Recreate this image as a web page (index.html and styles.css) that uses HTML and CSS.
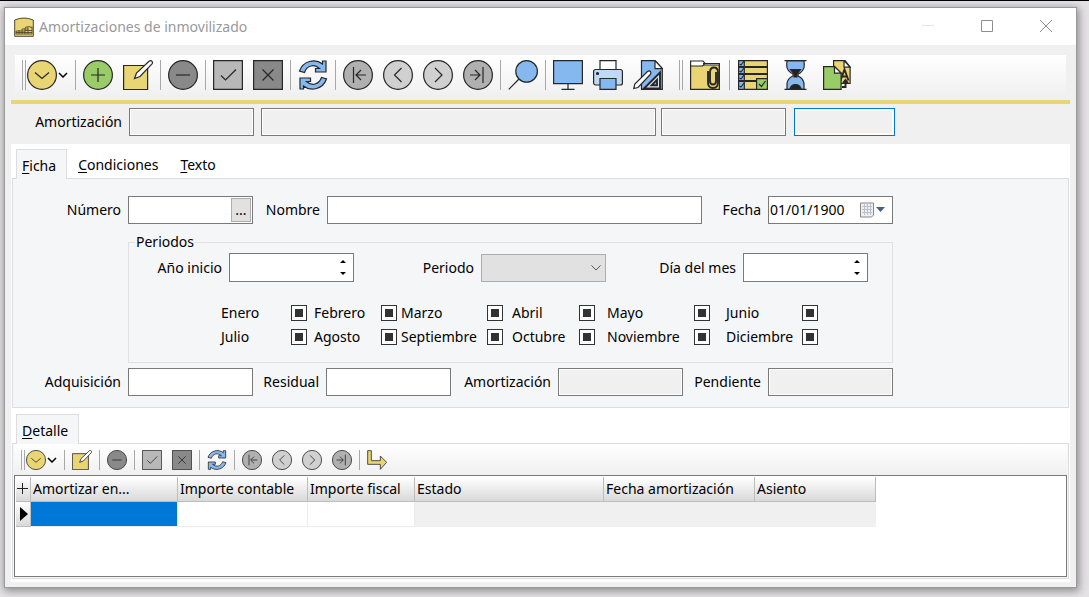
FILE: index.html
```html
<!DOCTYPE html>
<html lang="es">
<head>
<meta charset="utf-8">
<title>Amortizaciones de inmovilizado</title>
<link rel="stylesheet" href="styles.css">
</head>
<body>
<svg class="sprite" aria-hidden="true">
  <symbol id="menu" viewBox="0 0 30 30"><circle cx="15" cy="15" r="14.4" fill="#e9d574"/><path d="M8 12.500l7 6 7-6"/></symbol>
  <symbol id="caret" viewBox="0 0 10 6"><path d="M1 1l4 4 4-4"/></symbol>
  <symbol id="add" viewBox="0 0 30 30"><circle cx="15" cy="15" r="14.4" fill="#99cc66"/><path d="M15 8v14M8 15h14"/></symbol>
  <symbol id="edit" viewBox="0 0 30 30"><path d="M.6 5.500h24v24H.6z" fill="#e9d574"/><path d="M11.500 18.500l2-5.500L26 1.200q1.800-1.200 3 .2 1 1.400-.2 2.800L17 16.500z" fill="#fff"/></symbol>
  <symbol id="remove" viewBox="0 0 30 30"><circle cx="15" cy="15" r="14.4" fill="#898989"/><path d="M8 15h14"/></symbol>
  <symbol id="accept" viewBox="0 0 30 30"><path d="M.6.6h28.800v28.800H.6z" fill="#b8b8b8"/><path d="M8 15.500l4.500 4.500L23 9.500"/></symbol>
  <symbol id="cancel" viewBox="0 0 30 30"><path d="M.6.6h28.800v28.800H.6z" fill="#898989"/><path d="M9.500 9.500l11 11M20.500 9.500l-11 11"/></symbol>
  <symbol id="refresh" viewBox="0 0 30 30"><path d="M1.500 11C5 1 17-2 24.500 4V1H28v11H17.500V8.500h4C16 3.500 9 5.500 6.500 12.500zM28.500 19C25 29 13 32 5.500 26v3H2V18h10.500v3.500h-4C14 26.500 21 24.500 23.500 17.500z" fill="#85b8ef"/></symbol>
  <symbol id="first" viewBox="0 0 30 30"><circle cx="15" cy="15" r="14.4" fill="#b0b0b0"/><path d="M10.500 7v16M23 15h-9.500M18 10l-5 5 5 5"/></symbol>
  <symbol id="prev" viewBox="0 0 30 30"><circle cx="15" cy="15" r="14.4" fill="#d0d0d0"/><path d="M18.500 8l-7 7 7 7"/></symbol>
  <symbol id="next" viewBox="0 0 30 30"><circle cx="15" cy="15" r="14.4" fill="#d0d0d0"/><path d="M12 8l7 7-7 7"/></symbol>
  <symbol id="last" viewBox="0 0 30 30"><circle cx="15" cy="15" r="14.4" fill="#b0b0b0"/><path d="M20 7v16M7 15h9.500M12 10l5 5-5 5"/></symbol>
  <symbol id="find" viewBox="0 0 30 30"><circle cx="18.600" cy="11.400" r="10.800" fill="#85b8ef"/><path d="M11 19L.8 29.400"/></symbol>
  <symbol id="screen" viewBox="0 0 30 30"><path d="M.6.6h28.800v23H.6z" fill="#85b8ef"/><path d="M15 23.600v5.500M8.500 29.300h13"/></symbol>
  <symbol id="print" viewBox="0 0 30 30"><path d="M7 .6h16V10H7z" fill="#fff"/><rect x=".6" y="9.500" width="28.800" height="15.500" rx="2" fill="#bfdaf7"/><path d="M7 18.500h16v10.800H7z" fill="#85b8ef"/><circle cx="4.500" cy="13.500" r="1" fill="#272727"/></symbol>
  <symbol id="design" viewBox="0 0 30 30"><path d="M8.500.6h13.500l7.300 8v20.700H8.500z" fill="#85b8ef"/><path d="M22 .6v8h7.300z" fill="#fff"/><path d="M11 28.500L27 12.500v16zM18.500 25.300l5.500-5.500v5.500z" fill="#d8e7f8" fill-rule="evenodd" class="bold"/><path d="M.8 28.500l1-4.500L14.500 11.500q2-1.200 3 0 1 1.500-.2 3L5 27.500z" fill="#fff"/></symbol>
  <symbol id="attach" viewBox="0 0 30 30"><path d="M.6 5h28.800v24.300H.6z" fill="#e9d574"/><path d="M.6 1H13l2 2.500L12.500 6H.6z" fill="#fff"/><path d="M13 3.500h16.400V10"/><path d="M18 11v11.500q0 5.500 5 5.500t5-5.500V12.500q0-5-4-5t-4 5V21q0 3.500 3 3.500t3-3.500V12" class="bold"/></symbol>
  <symbol id="tasks" viewBox="0 0 30 30"><path d="M.6.6h28.800v28.800H.6z" fill="#e9d574"/><path d="M.6.6h5.700v28.800H.6z" fill="#85b8ef"/><path d="M6 7h23.400M6 14h23.400M6 21h13M.6 7H6M.6 14H6M.6 21H6" class="bold"/><path d="M1.500 4l1.500 1 3-4M1.500 11l1.500 1 3-4M1.500 18l1.500 1 3-4M1.500 26l1.500 1 3-4"/><path d="M18.600 18.600h10.800v10.800H18.600z" fill="#99cc66"/><path d="M21 24l2.500 2.500 4-5.500"/></symbol>
  <symbol id="wait" viewBox="0 0 30 30"><path d="M7 .6h17q.5 5 0 7-1.500 4.500-6 6.500v2q5 2 6 7v6.300H7V23q1-5 6-7v-2Q8.500 12 7 7.600 6.500 5 7 .6z" fill="#85b8ef"/><path d="M10.500 9.500h10L17 14v3h-3v-3zM10 29q1-4.500 5.500-4.500T21 29z" fill="#222"/><path d="M4.500.6h22M4.500 29.400h22"/></symbol>
  <symbol id="copy" viewBox="0 0 30 30"><path d="M11.600.6h11.500l5 6.400v16.500H11.600z" fill="#e9d574"/><path d="M22 .6v6.500h6z" fill="#fff"/><path d="M18.500 20.500l4-11 4 11M20 16.500h5" class="bold"/><path d="M1.600 6.600h11l6.500 6.500v16.300H1.600z" fill="#99cc66"/><path d="M12.500 6.600v6.500H19z" fill="#fff"/><path d="M20 27h3.500v-6M21 23l2.500-3 2.500 3" class="bold"/></symbol>
  <symbol id="go" viewBox="0 0 30 30"><path d="M1 1h5.500v15H20v-7l9.500 9.500L20 29v-7.500H1z" fill="#e9d574"/></symbol>
</svg>

<main class="window">
  <header class="titlebar">
    <svg class="app-icon" viewBox="0 0 20 20"><path d="M.7 3Q10-1 19.300 3v16.300H.7z" fill="#e9d574" stroke="#51482a"/><path d="M2 17h16M2 14h9M2 14v3M5 13v4M8 12v5M11 11v6M14 10v7M18 9.500V17M8 12h6M11 10.500q3.500-2 7 0M11 13.500h7M2 15.500h16" fill="none" stroke="#51482a" stroke-width=".9"/></svg>
    <h1 class="title">Amortizaciones de inmovilizado</h1>
    <button class="win-btn" aria-label="Minimizar" disabled><svg viewBox="0 0 12 12"><path d="M0 5.500h12" stroke="#e6e6e6"/></svg></button>
    <button class="win-btn" aria-label="Maximizar"><svg viewBox="0 0 12 12"><path d="M.5.5h11v11H.5z"/></svg></button>
    <button class="win-btn" aria-label="Cerrar"><svg viewBox="0 0 12 12"><path d="M0 0l12 12M12 0L0 12"/></svg></button>
  </header>

  <div class="toolbar-area">
    <nav class="toolbar" aria-label="Herramientas">
      <span class="grip"></span>
      <button class="tool tool-menu" aria-label="Menú"><svg><use href="#menu"/></svg><svg class="caret"><use href="#caret"/></svg></button>
      <span class="sep"></span>
      <button class="tool" aria-label="Añadir"><svg><use href="#add"/></svg></button>
      <button class="tool" aria-label="Editar"><svg><use href="#edit"/></svg></button>
      <span class="sep"></span>
      <button class="tool" aria-label="Eliminar"><svg><use href="#remove"/></svg></button>
      <span class="sep"></span>
      <button class="tool" aria-label="Aceptar"><svg><use href="#accept"/></svg></button>
      <button class="tool" aria-label="Cancelar"><svg><use href="#cancel"/></svg></button>
      <span class="sep"></span>
      <button class="tool" aria-label="Actualizar"><svg><use href="#refresh"/></svg></button>
      <span class="sep"></span>
      <button class="tool" aria-label="Primero"><svg><use href="#first"/></svg></button>
      <button class="tool" aria-label="Anterior"><svg><use href="#prev"/></svg></button>
      <button class="tool" aria-label="Siguiente"><svg><use href="#next"/></svg></button>
      <button class="tool" aria-label="Último"><svg><use href="#last"/></svg></button>
      <span class="sep"></span>
      <button class="tool" aria-label="Buscar"><svg><use href="#find"/></svg></button>
      <span class="sep"></span>
      <button class="tool" aria-label="Pantalla"><svg><use href="#screen"/></svg></button>
      <button class="tool" aria-label="Imprimir"><svg><use href="#print"/></svg></button>
      <button class="tool" aria-label="Diseñar"><svg><use href="#design"/></svg></button>
      <span class="grip grip-inner"></span>
      <button class="tool" aria-label="Adjuntos"><svg><use href="#attach"/></svg></button>
      <span class="sep sep-wide"></span>
      <button class="tool tool-wide" aria-label="Tareas"><svg><use href="#tasks"/></svg></button>
      <button class="tool tool-wide" aria-label="Procesos"><svg><use href="#wait"/></svg></button>
      <button class="tool tool-wide" aria-label="Copiar"><svg><use href="#copy"/></svg></button>
    </nav>
  </div>

  <div class="content">
    <form class="record-bar">
      <label for="rec">Amortización</label>
      <input id="rec" class="box readonly code" readonly>
      <input class="box readonly" aria-label="Descripción" readonly>
      <input class="box readonly code" aria-label="Estado" readonly>
      <input class="box readonly current" aria-label="Fecha" readonly>
    </form>

    <div class="tabs" role="tablist">
      <button class="tab active" role="tab" aria-selected="true"><u>F</u>icha</button>
      <button class="tab" role="tab"><u>C</u>ondiciones</button>
      <button class="tab" role="tab"><u>T</u>exto</button>
    </div>
    <form class="panel card">
      <div class="row row-main">
        <label for="num">Número</label>
        <div class="box combo"><input id="num"><button type="button" class="lookup" aria-label="Buscar número">...</button></div>
        <label for="nom">Nombre</label>
        <input id="nom" class="box">
        <label for="fec">Fecha</label>
        <div class="box combo date"><input id="fec" value="01/01/1900"><button type="button" class="calendar" aria-label="Calendario"><svg viewBox="0 0 28 18"><path d="M1.500 2h13v12l-2 2h-11z" fill="#edf1f5" stroke="#8d8484"/><path d="M3 5.500h10M3 8.500h10M3 11.500h10M5.500 3v11M8.500 3v11M11.500 3v11" stroke="#b9c1cb"/><path d="M17 6h9l-4.500 5z" fill="#475d8c"/></svg></button></div>
      </div>
      <fieldset class="periods">
        <legend>Periodos</legend>
        <div class="row row-period">
          <label for="ano">Año inicio</label>
          <div class="box combo tall"><input id="ano"><span class="spin"><button type="button" aria-label="Más"><svg viewBox="0 0 6 3"><path d="M0 3l3-3 3 3z"/></svg></button><button type="button" aria-label="Menos"><svg viewBox="0 0 6 3"><path d="M0 0l3 3 3-3z"/></svg></button></span></div>
          <label for="per">Periodo</label>
          <div class="select"><select id="per" disabled><option></option></select><svg viewBox="0 0 10 6"><path d="M.5.500l4.500 4.500 4.500-4.500"/></svg></div>
          <label for="dia">Día del mes</label>
          <div class="box combo tall"><input id="dia"><span class="spin"><button type="button" aria-label="Más"><svg viewBox="0 0 6 3"><path d="M0 3l3-3 3 3z"/></svg></button><button type="button" aria-label="Menos"><svg viewBox="0 0 6 3"><path d="M0 0l3 3 3-3z"/></svg></button></span></div>
        </div>
        <div class="months">
          <label for="m1">Enero</label><input type="checkbox" id="m1">
          <label for="m2">Febrero</label><input type="checkbox" id="m2">
          <label for="m3">Marzo</label><input type="checkbox" id="m3">
          <label for="m4">Abril</label><input type="checkbox" id="m4">
          <label for="m5">Mayo</label><input type="checkbox" id="m5">
          <label for="m6">Junio</label><input type="checkbox" id="m6">
          <label for="m7">Julio</label><input type="checkbox" id="m7">
          <label for="m8">Agosto</label><input type="checkbox" id="m8">
          <label for="m9">Septiembre</label><input type="checkbox" id="m9">
          <label for="m10">Octubre</label><input type="checkbox" id="m10">
          <label for="m11">Noviembre</label><input type="checkbox" id="m11">
          <label for="m12">Diciembre</label><input type="checkbox" id="m12">
        </div>
      </fieldset>
      <div class="row row-amounts">
        <label for="adq">Adquisición</label><input id="adq" class="box">
        <label for="res">Residual</label><input id="res" class="box">
        <label for="amo">Amortización</label><input id="amo" class="box readonly" readonly>
        <label for="pen">Pendiente</label><input id="pen" class="box readonly" readonly>
      </div>
    </form>

    <div class="tabs tabs-detail" role="tablist">
      <button class="tab active" role="tab" aria-selected="true"><u>D</u>etalle</button>
    </div>
    <section class="panel detail">
      <nav class="toolbar small" aria-label="Herramientas de detalle">
        <span class="grip"></span>
        <button class="tool tool-menu" aria-label="Menú"><svg><use href="#menu"/></svg><svg class="caret"><use href="#caret"/></svg></button>
        <span class="sep"></span>
        <button class="tool" aria-label="Editar"><svg><use href="#edit"/></svg></button>
        <span class="sep"></span>
        <button class="tool" aria-label="Eliminar"><svg><use href="#remove"/></svg></button>
        <span class="sep"></span>
        <button class="tool" aria-label="Aceptar"><svg><use href="#accept"/></svg></button>
        <button class="tool" aria-label="Cancelar"><svg><use href="#cancel"/></svg></button>
        <span class="sep"></span>
        <button class="tool" aria-label="Actualizar"><svg><use href="#refresh"/></svg></button>
        <span class="sep"></span>
        <button class="tool" aria-label="Primero"><svg><use href="#first"/></svg></button>
        <button class="tool" aria-label="Anterior"><svg><use href="#prev"/></svg></button>
        <button class="tool" aria-label="Siguiente"><svg><use href="#next"/></svg></button>
        <button class="tool" aria-label="Último"><svg><use href="#last"/></svg></button>
        <span class="sep"></span>
        <button class="tool" aria-label="Ir a"><svg><use href="#go"/></svg></button>
      </nav>
      <div class="grid-frame">
        <table class="grid">
          <colgroup><col class="c-mark"><col class="c-date"><col class="c-book"><col class="c-tax"><col class="c-state"><col class="c-done"><col class="c-entry"></colgroup>
          <thead><tr><th class="mark"><svg viewBox="0 0 11 14"><path d="M5.500 1v11M0 6.500h11"/></svg></th><th>Amortizar en...</th><th>Importe contable</th><th>Importe fiscal</th><th>Estado</th><th>Fecha amortización</th><th>Asiento</th></tr></thead>
          <tbody><tr><td class="mark"><svg viewBox="0 0 11 14"><path class="pointer" d="M3 0l8 7-8 7z"/></svg></td><td class="selected"></td><td></td><td></td><td class="locked"></td><td class="locked"></td><td class="locked"></td></tr></tbody>
        </table>
      </div>
    </section>
  </div>
</main>
<script src="app.js"></script>
</body>
</html>
```

FILE: app.js
```js
// Months start undefined until a record is loaded.
document.querySelectorAll('.months input').forEach(function (box) {
  box.indeterminate = true;
});
```

FILE: styles.css
```css
* { box-sizing: border-box; }

body {
  margin: 0;
  min-height: 100vh;
  display: flex;
  padding: 6px 12px 9px 4px;
  border-top: 1px solid #000;
  background: #e4e2e4;
  font: 14px/20px "Noto Sans", "Open Sans", sans-serif;
  color: #000;
}

button, input, select { font: inherit; color: inherit; margin: 0; }
button { padding: 0; border: 0; background: none; }
input { min-width: 0; outline: none; }
label { white-space: nowrap; }
.sprite { position: absolute; width: 0; height: 0; }
symbol path, symbol circle, symbol rect { stroke: #272727; stroke-width: 1.2; }
symbol path:not([fill]) { fill: none; }
symbol .bold { stroke-width: 1.9; }
#caret path { stroke: #000; stroke-width: 1.5; }

.window {
  flex: 1;
  display: flex;
  flex-direction: column;
  background: #f0f0f0;
  border: 1px solid #999;
  box-shadow: 1px 2px 8px 1px #8c8c8c;
}

.titlebar {
  display: flex;
  align-items: center;
  height: 37px;
  padding: 0 1px 0 9px;
  background: #fff;
}
.app-icon { width: 20px; height: 20px; }
.title { flex: 1; margin: 0 0 0 5px; font-size: 14px; font-weight: 400; color: #999; }
.win-btn { align-self: flex-start; width: 59px; height: 36px; display: grid; place-items: center; }
.win-btn svg { width: 12px; height: 12px; fill: none; stroke: #8f8f8f; }

.toolbar-area {
  margin: 0 6px;
  padding: 10px 4px 4px;
  border-bottom: 4px solid #e9d574;
}
.toolbar {
  display: flex;
  align-items: center;
  height: 41px;
  padding: 0 0 1px 7px;
  background: linear-gradient(#fff, #f0f0f0);
}
.tool { display: flex; align-items: center; margin: 0 5px; }
.tool svg { display: block; width: 30px; height: 30px; }
.tool-menu { margin-left: 1px; gap: 1px; }
.tool-wide { margin: 0 6px; }
.tool .caret { width: 10px; height: 6px; }
.sep { width: 1px; height: 30px; margin: 0 2px; background: #a8a8a8; }
.sep-wide { margin-left: 4px; }
.grip { width: 4px; height: 30px; border: solid #a8a8a8; border-width: 0 1px; }
.grip-inner { margin: 0 2px 0 11px; }

.content {
  flex: 1;
  display: flex;
  flex-direction: column;
  margin: 0 6px 5px;
  background: #fff;
}
.record-bar {
  display: grid;
  grid-template-columns: 95px 127px 395px 128px 101px;
  column-gap: 5px;
  align-items: center;
  height: 40px;
  padding: 0 18px 4px;
  background: #f0f0f0;
}
.record-bar label, .row label { text-align: right; }
.record-bar label { padding-right: 2px; }

.box {
  display: block;
  width: 100%;
  height: 28px;
  padding: 0 1px;
  border: 1px solid #7a7a7a;
  border-radius: 0;
  background: #fff;
}
.code { width: 125px; }
.readonly { background: #f0f0f0; box-shadow: inset 0 0 0 1px #fff; }
.current { border-color: #0078d7; box-shadow: inset 0 0 0 2px #fff; }
.combo { display: flex; align-items: center; }
.combo input { flex: 1; width: 0; padding: 0; border: 0; background: none; }
.tall { height: 29px; }
.lookup { width: 20px; height: 24px; border: 1px solid #adadad; background: #e1e1e1; line-height: 18px; }
.calendar svg { display: block; width: 28px; height: 18px; }
.date { padding-right: 5px; }

.tabs { display: flex; align-items: flex-end; height: 34px; padding-left: 5px; }
.tab {
  height: 28px;
  padding: 0 10px;
  border: 1px solid transparent;
  border-bottom: 0;
}
.tab.active {
  position: relative;
  height: 30px;
  margin-bottom: -1px;
  padding: 2px 10px 0 5px;
  border-color: #dcdddf;
  background: #f5f6f8;
}
.tabs-detail { height: 35px; }
u { text-underline-offset: 2px; }

.panel { margin: 0 1px; border: 1px solid #dcdddf; background: #f5f6f8; }
.card { padding: 17px 15px 11px; }
.row { display: grid; column-gap: 7px; align-items: center; }
.row-main { grid-template-columns: 93px 125px 60px 375px 52px 125px; }
.row-amounts { grid-template-columns: 93px 125px 59px 125px 93px 125px 71px 125px; }

.periods {
  width: 765px;
  margin: 8px 0 5px 100px;
  padding: 1px 0 15px;
  border: 1px solid #dfe1e4;
}
.periods legend { padding: 0 1px; margin-left: 6px; }
.row-period { grid-template-columns: 92px 125px 113px 125px 123px 125px; padding-left: 1px; }
.spin { display: grid; row-gap: 9px; padding-right: 6px; }
.spin button { display: block; height: 3px; }
.spin svg { display: block; width: 6px; height: 3px; }
.select { display: grid; align-items: center; }
.select select {
  grid-area: 1 / 1;
  appearance: none;
  width: 100%;
  height: 28px;
  border: 1px solid #adadad;
  border-radius: 0;
  background: #e1e1e1;
  opacity: 1;
}
.select svg { grid-area: 1 / 1; justify-self: end; width: 10px; height: 6px; margin-right: 5px; fill: none; stroke: #555; }

.months {
  display: grid;
  grid-template-columns: 70px 23px 67px 20px 86px 25px 67px 28px 87px 32px 76px 16px;
  row-gap: 4px;
  align-items: center;
  padding: 21px 0 0 92px;
}
.months input {
  appearance: none;
  display: grid;
  place-items: center;
  width: 16px;
  height: 16px;
  border: 1px solid #333;
  background: #fff;
}
.months input:indeterminate::before { content: ""; width: 8px; height: 8px; background: #333; }
.months input:checked::before { content: "✓"; line-height: 14px; }

.detail { flex: 1; display: flex; flex-direction: column; margin-bottom: 3px; padding: 0 1px 1px; }
.small { height: 31px; padding: 0 0 0 7px; }
.small .tool svg { width: 20px; height: 20px; }
.small .tool .caret { width: 10px; height: 6px; }
.small .sep, .small .grip { height: 20px; }
.grid-frame { flex: 1; border: 1px solid #7a7a7a; background: #fff; padding: 1px; }

.grid { table-layout: fixed; width: 860px; border-collapse: separate; border-spacing: 0; }
.c-mark { width: 15px; }
.c-date { width: 147px; }
.c-book { width: 130px; }
.c-tax { width: 107px; }
.c-state { width: 189px; }
.c-done { width: 151px; }
.c-entry { width: 121px; }
.grid th {
  height: 25px;
  padding: 0 2px;
  border: solid #bdbdbd;
  border-width: 0 1px 1px 0;
  background: linear-gradient(#fff, #d9d9d9);
  font-weight: 400;
  text-align: left;
  white-space: nowrap;
}
.grid td { height: 25px; padding: 0; border: solid #ececec; border-width: 0 1px 1px 0; }
.grid .mark { padding: 0 0 0 1px; }
.grid td.mark { border-color: #bdbdbd; background: linear-gradient(#fff, #d9d9d9); }
.grid .mark svg { display: block; width: 11px; height: 14px; fill: none; stroke: #222; }
.grid .mark .pointer { fill: #000; stroke: none; }
.grid td.selected { background: #0078d7; }
.grid td.locked { background: #f0f0f0; border-color: #f0f0f0; }
```
